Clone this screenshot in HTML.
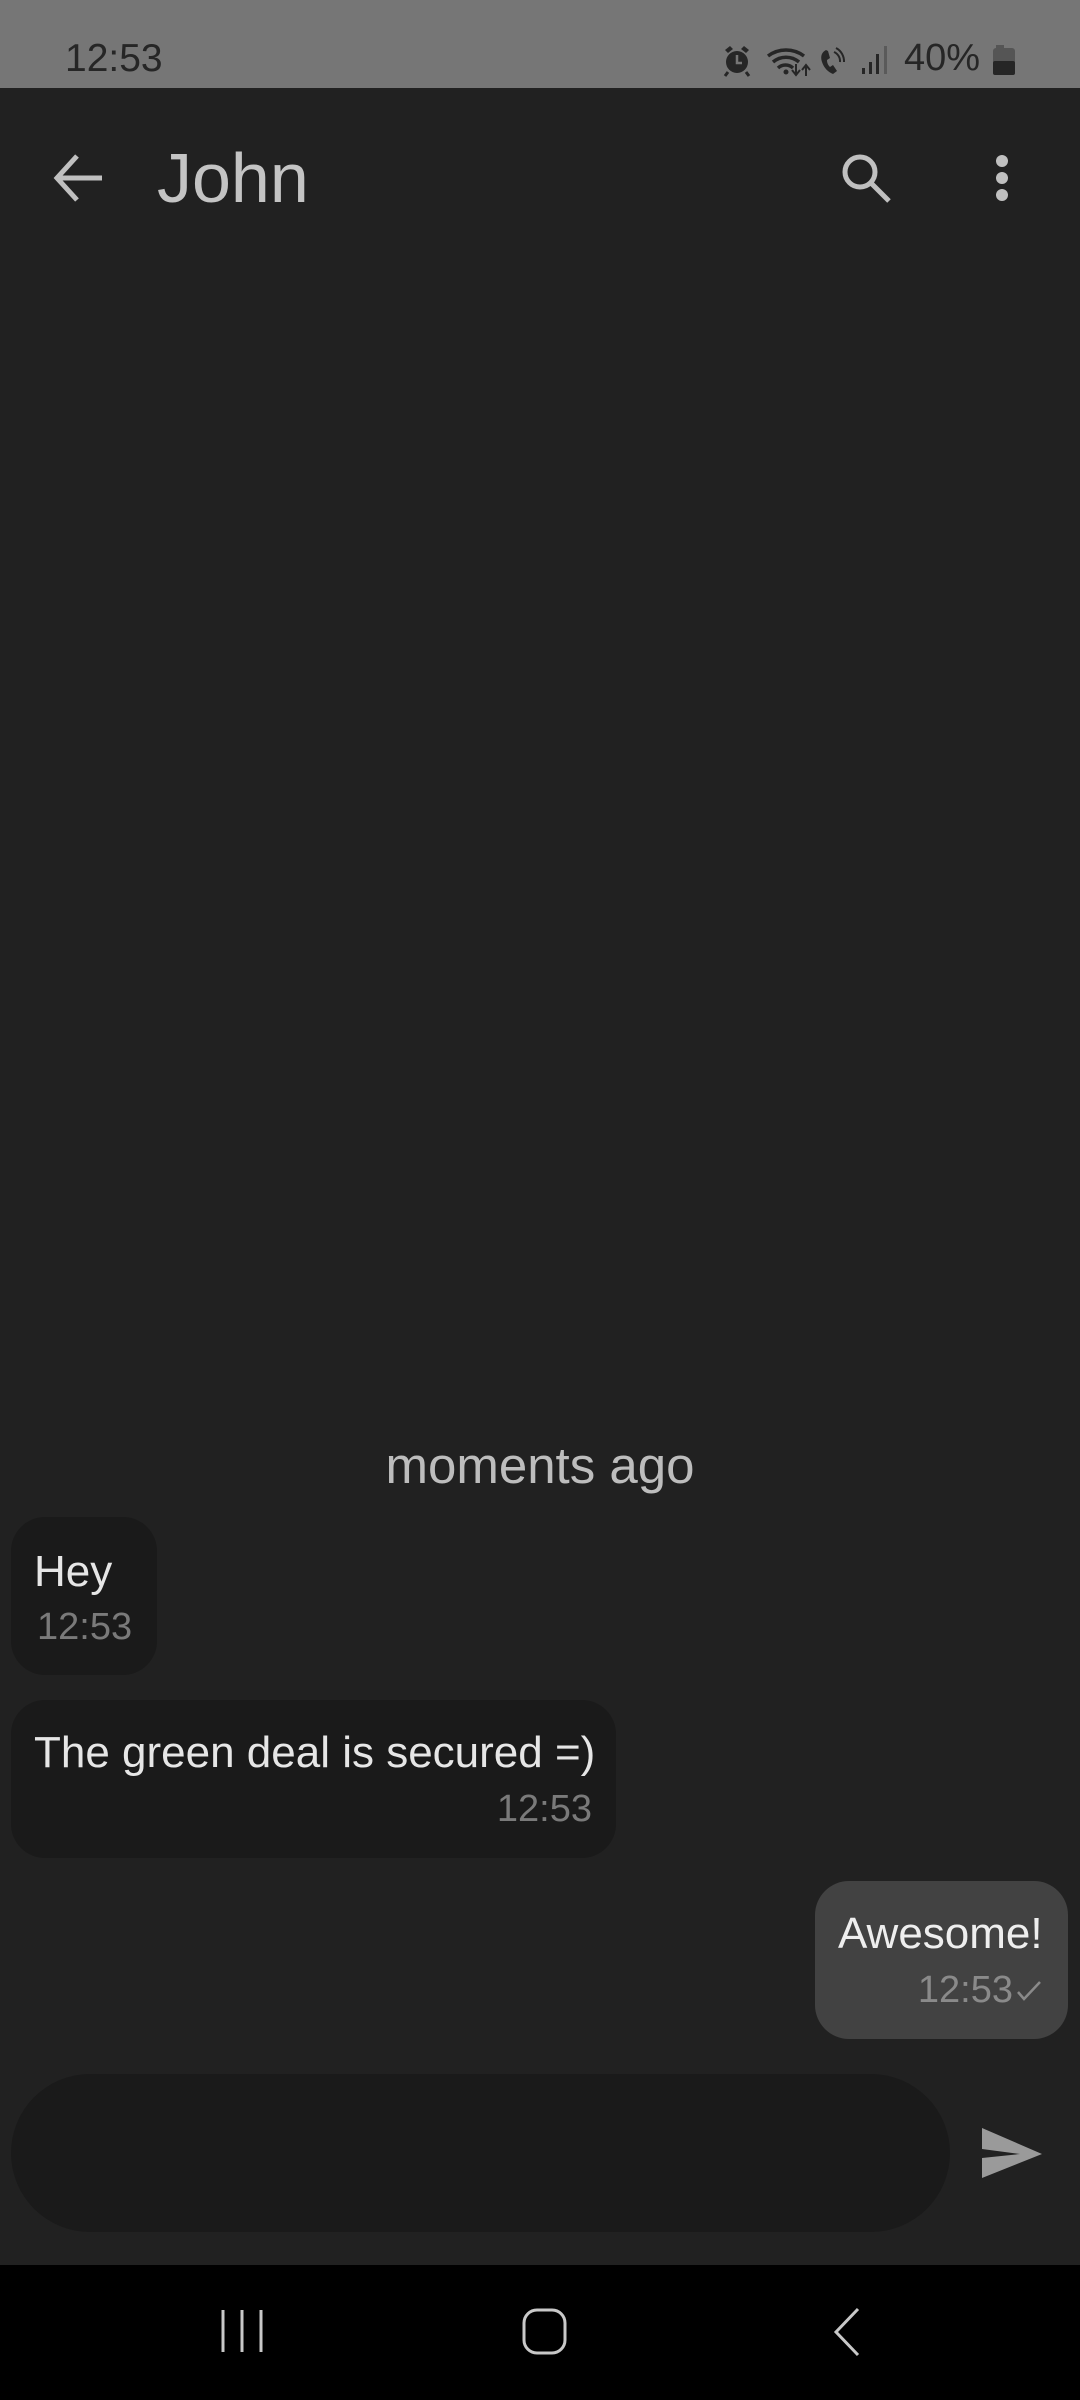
<!DOCTYPE html>
<html><head><meta charset="utf-8"><style>
*{margin:0;padding:0;box-sizing:border-box}
body{width:1080px;height:2400px;background:#212121;position:relative;overflow:hidden;font-family:"Liberation Sans",sans-serif}
.abs{position:absolute;white-space:nowrap}
.bub{position:absolute;background:#1a1a1a;border-radius:34px}
</style></head><body>
<div class="abs" style="left:0;top:0;width:1080px;height:88px;background:#767676"></div>
<div class="abs" style="left:65px;top:39px;font-size:39px;color:#262626;line-height:1">12:53</div>
<svg class="abs" style="left:0;top:0" width="1080" height="88">
 <g fill="#262626">
  <circle cx="737" cy="62" r="11"/>
  <path d="M725 50l5-4 3 3-5 4zM749 50l-5-4-3 3 5 4z"/>
  <path d="M728 72l-3 4M746 72l3 4" stroke="#262626" stroke-width="3"/>
 </g>
 <path d="M737 55v8h5" stroke="#767676" stroke-width="2.5" fill="none"/>
 <g fill="none" stroke="#262626" stroke-width="3.5">
  <path d="M768 56a30 30 0 0 1 36 0"/><path d="M773 62a20 20 0 0 1 26 0"/><path d="M778 68a11 11 0 0 1 15 0"/>
 </g>
 <circle cx="786" cy="72" r="2.5" fill="#262626"/>
 <path d="M796 64v10M792 70l4 5 4-5M806 76v-10M802 70l4-5 4 5" stroke="#262626" stroke-width="2" fill="none"/>
 <path d="M826 50c-4 2-6 6-4 12 2 6 6 10 11 12l4-3-4-6-3 2c-2-2-3-4-3-7l3-2-2-7z" fill="#262626"/>
 <path d="M834 52a10 10 0 0 1 6 10M836 48a15 15 0 0 1 8 14" stroke="#262626" stroke-width="2" fill="none"/>
 <rect x="862" y="68" width="3" height="6" fill="#262626"/><rect x="869" y="62" width="3" height="12" fill="#262626"/><rect x="876" y="54" width="3" height="20" fill="#262626"/><rect x="884" y="46" width="3" height="28" fill="#5a5a5a"/>
 <rect x="996" y="45" width="8" height="4" fill="#555"/>
 <rect x="993" y="48" width="22" height="27" rx="3" fill="#555"/>
 <rect x="993" y="61" width="22" height="14" rx="2" fill="#262626"/>
</svg>
<div class="abs" style="left:904px;top:39px;font-size:38px;color:#262626;line-height:1">40%</div>

<svg class="abs" style="left:0;top:92px" width="1080" height="140">
 <path d="M59 86h43M77 64l-20 22 20 22" stroke="#c0c0c0" stroke-width="5" fill="none"/>
 <circle cx="860" cy="80" r="15" stroke="#c0c0c0" stroke-width="5" fill="none"/>
 <path d="M871 91l18 18" stroke="#c0c0c0" stroke-width="5"/>
 <circle cx="1002" cy="69" r="6" fill="#c0c0c0"/><circle cx="1002" cy="86" r="6" fill="#c0c0c0"/><circle cx="1002" cy="103" r="6" fill="#c0c0c0"/>
</svg>
<div class="abs" style="left:157px;top:143px;font-size:70px;color:#c4c4c4;line-height:1">John</div>

<div class="abs" style="left:0;width:1080px;text-align:center;top:1440px;font-size:51px;color:#bdbdbd;line-height:1">moments ago</div>

<div class="bub" style="left:11px;top:1517px;width:146px;height:158px"></div>
<div class="abs" style="left:34px;top:1550px;font-size:44px;color:#e6e6e6;line-height:1">Hey</div>
<div class="abs" style="left:37px;top:1608px;font-size:38px;color:#7a7a7a;line-height:1">12:53</div>

<div class="bub" style="left:11px;top:1700px;width:605px;height:158px"></div>
<div class="abs" style="left:34px;top:1731px;font-size:44px;color:#e6e6e6;line-height:1">The green deal is secured =)</div>
<div class="abs" style="right:488px;top:1790px;font-size:38px;color:#7a7a7a;line-height:1">12:53</div>

<div class="bub" style="left:815px;top:1881px;width:253px;height:158px;background:#424242"></div>
<div class="abs" style="left:838px;top:1912px;font-size:44px;color:#eeeeee;line-height:1">Awesome!</div>
<div class="abs" style="right:37px;top:1971px;font-size:38px;color:#8a8a8a;line-height:1">12:53<svg width="28" height="30" style="vertical-align:-4px;margin-left:2px"><path d="M3 16l6 7 16-17" stroke="#8a8a8a" stroke-width="2.5" fill="none"/></svg></div>

<div class="abs" style="left:11px;top:2074px;width:939px;height:158px;border-radius:79px;background:#1a1a1a"></div>
<svg class="abs" style="left:980px;top:2124px" width="64" height="58"><path d="M2 4L62 30 2 54 2 34 40 30 2 25z" fill="#9a9a9a"/></svg>

<div class="abs" style="left:0;top:2265px;width:1080px;height:135px;background:#000"></div>
<svg class="abs" style="left:0;top:2265px" width="1080" height="135">
 <g stroke="#c8c8c8" stroke-width="3" fill="none">
  <path d="M223 45v42M242 45v42M261 45v42"/>
  <rect x="524" y="45" width="41" height="43" rx="13"/>
  <path d="M858 44l-22 23 22 23"/>
 </g>
</svg>
</body></html>
